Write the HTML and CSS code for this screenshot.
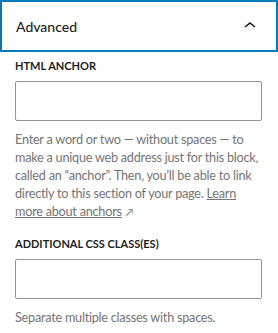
FILE: index.html
```html
<!DOCTYPE html>
<html lang="en">
  <head>
    <meta charset="UTF-8" />
    <meta name="viewport" content="width=device-width, initial-scale=1.0" />
    <title>Advanced</title>
    <link rel="stylesheet" href="styles.css">
  </head>
  <body>
    <div class="panel">
      <button type="button" class="panel-toggle">
        <span>Advanced</span>
        <svg class="chevron" width="24" height="24" viewBox="0 0 24 24">
          <path d="M6.5 12.4L12 8l5.5 4.4-.9 1.2L12 10l-4.6 3.6-.9-1.2z" />
        </svg>
      </button>
      <div class="panel-body">
        <div class="field">
          <label for="anchor">HTML anchor</label>
          <input type="text" id="anchor" />
          <p class="help">
            Enter a word or two — without spaces — to make a unique web address
            just for this block, called an “anchor”. Then, you’ll be able to
            link directly to this section of your page.
            <a href="#">Learn more about anchors</a><span class="ext">↗</span>
          </p>
        </div>
        <div class="field">
          <label for="css-class">Additional CSS class(es)</label>
          <input type="text" id="css-class" />
          <p class="help">Separate multiple classes with spaces.</p>
        </div>
      </div>
    </div>
  </body>
</html>
```

FILE: styles.css
```css
/* Page */
body {
  margin: 0;
  font-family: Lato, "Noto Sans", sans-serif;
  background: #ffffff;
  color: #1e1e1e;
}

.panel {
  width: 278px;
}

/* Header toggle */
.panel-toggle {
  display: flex;
  align-items: center;
  justify-content: space-between;
  width: 100%;
  height: 52px;
  margin: 0;
  padding: 0 14px 0 14px;
  border: 2px solid #007cba;
  background: #ffffff;
  font-family: inherit;
  font-size: 14px;
  font-weight: 500;
  color: #1e1e1e;
  cursor: pointer;
  box-sizing: border-box;
}

.chevron {
  fill: #1e1e1e;
}

/* Fields */
.panel-body {
  padding: 6px 16px 0 15px;
}

.field {
  margin-bottom: 15px;
}

.field label {
  display: block;
  font-size: 11px;
  font-weight: 700;
  text-transform: uppercase;
  line-height: 16px;
  margin-bottom: 7px;
}

.field input {
  display: block;
  width: 100%;
  height: 40px;
  box-sizing: border-box;
  border: 1px solid #949494;
  border-radius: 2px;
  font-size: 13px;
  padding: 0 8px;
}

.help {
  margin: 9px 0 0;
  font-size: 12.7px;
  letter-spacing: -0.25px;
  line-height: 18px;
  color: #757575;
}

.help a {
  color: #757575;
}

.ext {
  font-size: 10px;
  margin-left: 4px;
}
```
